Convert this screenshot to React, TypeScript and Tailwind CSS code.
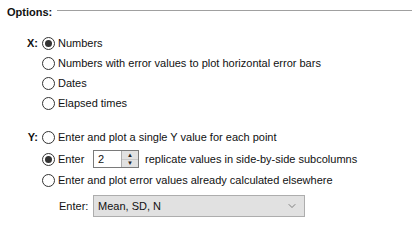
import { ChevronDown } from "lucide-react";

const Radio = ({ checked }: { checked?: boolean }) => (
  <span className="flex size-[13px] shrink-0 items-center justify-center rounded-full border border-[#333] bg-white">
    {checked && <span className="size-[7px] rounded-full bg-[#333]" />}
  </span>
);

const Option = ({ label, checked, h = "h-[20px]" }: { label: string; checked?: boolean; h?: string }) => (
  <div className={`flex ${h} items-center gap-[3px]`}>
    <Radio checked={checked} />
    <span>{label}</span>
  </div>
);

export default function App() {
  return (
    <div className="h-[247px] w-[412px] bg-white text-[11px] text-[#111] [font-family:Tahoma,'Liberation_Sans',Arial,sans-serif]">
      <div className="flex h-[25px] items-center gap-[5px] pl-[7px]">
        <span className="font-bold">Options:</span>
        <div className="mb-[4px] h-px flex-1 bg-[#a0a0a0]" />
      </div>

      <div className="mt-[8px] flex">
        <span className="flex h-[20px] w-[42px] items-center justify-end pr-[4px] font-bold">X:</span>
        <div className="flex flex-col">
          <Option label="Numbers" checked />
          <Option label="Numbers with error values to plot horizontal error bars" />
          <Option label="Dates" />
          <Option label="Elapsed times" />
        </div>
      </div>

      <div className="mt-[14px] flex">
        <span className="flex h-[21px] w-[42px] items-center justify-end pr-[4px] font-bold">Y:</span>
        <div className="flex flex-col">
          <Option label="Enter and plot a single Y value for each point" h="h-[21px]" />
          <div className="flex h-[22px] items-center gap-[3px]">
            <Radio checked />
            <span className="w-[32px]">Enter</span>
            <div className="flex h-[18px] w-[46px] border border-[#7a7a7a] bg-white">
              <span className="flex-1 pl-[4px] leading-[16px]">2</span>
              <div className="flex w-[17px] flex-col border-l border-[#acacac] bg-[#e1e1e1]">
                <span className="flex flex-1 items-center justify-center border-b border-[#c8c8c8] text-[6px] leading-none text-[#222]">▲</span>
                <span className="flex flex-1 items-center justify-center text-[6px] leading-none text-[#222]">▼</span>
              </div>
            </div>
            <span className="ml-[3px]">replicate values in side-by-side subcolumns</span>
          </div>
          <Option label="Enter and plot error values already calculated elsewhere" />
          <div className="mt-[5px] flex h-[22px] items-center">
            <span className="w-[51px] pl-[17px]">Enter:</span>
            <div className="flex h-[22px] w-[212px] items-center justify-between border border-[#adadad] bg-[#e1e1e1] pl-[4px] pr-[6px]">
              <span>Mean, SD, N</span>
              <ChevronDown size={12} strokeWidth={1.25} className="text-[#444]" />
            </div>
          </div>
        </div>
      </div>
    </div>
  );
}
